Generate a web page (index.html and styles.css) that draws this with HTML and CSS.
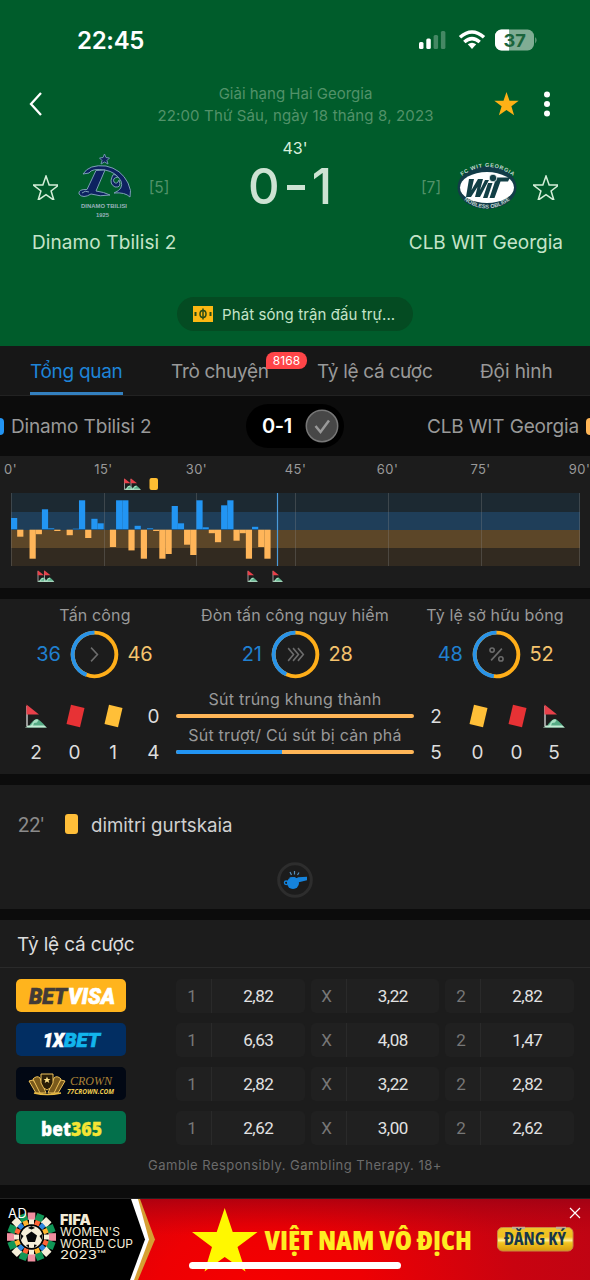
FILE: index.html
```html
<!DOCTYPE html>
<html lang="vi">
<head>
<meta charset="utf-8">
<title>Dinamo Tbilisi 2 - CLB WIT Georgia</title>
<link rel="stylesheet" href="styles.css">
</head>
<body>
<svg class="defs" width="0" height="0">
  <symbol id="corner" viewBox="0 0 22 24">
    <path d="M4 22.5 Q7 16 12 15 Q15 15.500 21.500 23.500 H2z" fill="#56ab85"/>
    <path d="M9 16.500 Q12 14.500 13.500 16 L12 18.500 9 19 8 22 5 23z" fill="#a9e0c3"/>
    <path d="M0 23.500 L3 21.500 H19 L22 23.500z" fill="#c4ecd5"/>
    <path d="M2 2V22" stroke="#ddd" stroke-width="1.300"/>
    <path d="M1.500 .5 L14 10.500 H1.500z" fill="#e8404a"/>
  </symbol>
  <symbol id="card" viewBox="0 0 20 24"><path d="M5.500 .8 L19 4 L14.500 23.300 L1 20z" fill="currentColor"/></symbol>
  <symbol id="star" viewBox="0 0 24 24"><path d="M12 1 L14.900 9.300 H23.700 L16.700 14.700 L19.300 23.300 L12 18.200 L4.700 23.300 L7.300 14.700 L.3 9.300 H9.100z"/></symbol>
</svg>

<header class="hero">
  <div class="status">
    <span class="clock">22:45</span>
    <svg width="120" height="24" viewBox="0 0 120 24">
      <g fill="#fff"><rect x="1" y="14" width="4.500" height="7" rx="1.500"/><rect x="8.300" y="10.500" width="4.500" height="10.500" rx="1.500"/></g>
      <g fill="#fff" opacity=".27"><rect x="15.600" y="7" width="4.500" height="14" rx="1.500"/><rect x="22.900" y="3" width="4.500" height="18" rx="1.500"/></g>
      <g fill="none" stroke="#fff" stroke-width="3.500"><path d="M42 9.300 Q54 -1.300 66 9.300"/><path d="M46.300 14 Q54 7.300 61.700 14"/></g>
      <path d="M49.800 16.300 Q54 13 58.200 16.300 L54 21z" fill="#fff"/>
      <rect x="77" y="1.500" width="39" height="21" rx="6.500" fill="#80ad94"/>
      <path d="M91 1.500H83.500A6.500 6.500 0 0 0 77 8V16A6.500 6.500 0 0 0 83.500 22.500H91z" fill="#fff"/>
      <path d="M117.300 9 Q119.700 12.200 117.300 15.500z" fill="#80ad94"/>
      <text x="85.500" y="18.500" class="battery" textLength="22.500" lengthAdjust="spacingAndGlyphs">37</text>
    </svg>
  </div>
  <div class="topbar">
    <svg class="back" width="16" height="26" viewBox="0 0 16 26"><path d="M13 2 L3 13 L13 24" fill="none" stroke="#fff" stroke-width="2.300"/></svg>
    <div class="league"><div class="league-name">Giải hạng Hai Georgia</div><div class="league-date">22:00 Thứ Sáu, ngày 18 tháng 8, 2023</div></div>
    <svg class="fav" width="25" height="25"><use href="#star"/></svg>
    <svg width="8" height="26" fill="#fff"><circle cx="4" cy="3.500" r="3"/><circle cx="4" cy="13" r="3"/><circle cx="4" cy="22.500" r="3"/></svg>
  </div>
  <div class="match">
    <svg class="outline" width="26" height="26" viewBox="-1 -1 26 26"><use href="#star"/></svg>
    <svg class="crest" width="54" height="68" viewBox="0 0 54 68">
      <path d="M26.500 1 L28 4.500 L31.500 5 L29 7.500 L30 11 L26.500 9 L23 11 L24 7.500 L21.500 5 L25 4.500z" fill="#11265d" stroke="#6e95ad"/>
      <g fill="#0d2260" stroke="#7c9fb5" stroke-width="1">
        <path d="M5 21 Q11 11 28 13 Q43 16 50 30 Q54 38 52 44 Q47 39 36 40 Q46 36 43 28 Q38 19 27 17 Q14 15 11 20z"/>
        <path d="M18 17.500 L27 17 L18 38 Q26 39 32 42 Q22 44 13 41 Q5 46 1 41 Q0 36 9 36.500z"/>
        <path d="M34 24 Q35 19 40 24 Q34 25 36 29 Q39 32 41 27 Q44 35 37 34 Q31 31 34 24z"/>
      </g>
      <path d="M4 40 Q7 37 11 39" stroke="#7c9fb5" fill="none"/>
      <text x="3" y="55" class="crest-text" textLength="46" lengthAdjust="spacingAndGlyphs">DINAMO TBILISI</text>
      <text x="18" y="64" class="crest-text" textLength="13" lengthAdjust="spacingAndGlyphs">1925</text>
    </svg>
    <span class="rank rank-home">[5]</span>
    <div class="score"><div class="minute">43'</div><div class="goals"><span>0</span><i></i><span>1</span></div></div>
    <span class="rank rank-away">[7]</span>
    <svg class="wit" width="62" height="48" viewBox="0 0 62 48">
      <defs><path id="arcTop" d="M6 13 Q31 -5 57 13"/><path id="arcBottom" d="M8 37 Q31 54 54 37"/></defs>
      <ellipse cx="31" cy="24.500" rx="29.500" ry="21.500" fill="#123c48"/>
      <ellipse cx="31" cy="24.500" rx="27" ry="15.500" fill="#fff"/>
      <g fill="#123f46">
        <path d="M13 16 H18 L15.500 27 L22 16 H27 L24 27 L29 17 H33 L24 34 H19 L21.500 24 L15 34 H10z"/>
        <path d="M32 20 H36.500 L31.500 35 H27z"/><path d="M38 14.500 H54 L52 18.500 H44.500 L38.500 35 H33.500 L39 18.500 H36z"/><circle cx="37" cy="15" r="3.800" stroke="#fff" stroke-width=".8"/>
      </g>
      <text class="wit-text"><textPath href="#arcTop" textLength="55">FC WIT GEORGIA</textPath></text>
      <text class="wit-text"><textPath href="#arcBottom" textLength="50">NOBLESS OBLIGE</textPath></text>
    </svg>
    <svg class="outline" width="26" height="26" viewBox="-1 -1 26 26"><use href="#star"/></svg>
  </div>
  <div class="names"><span class="n-home">Dinamo Tbilisi 2</span><span class="n-away">CLB WIT Georgia</span></div>
  <div class="stream">
    <svg width="20" height="16"><rect width="20" height="16" fill="#fcb813"/><g stroke="#2a4b17" stroke-width="1.500" fill="none"><ellipse cx="10" cy="8" rx="3" ry="3.500"/><path d="M10 2.500V13.500"/></g><rect x="1.500" y="6" width="2" height="4" fill="#2a4b17"/><rect x="16.500" y="6" width="2" height="4" fill="#2a4b17"/></svg>
    <span>Phát sóng trận đấu trự...</span>
  </div>
</header>

<nav class="tabs">
  <a class="tab active t1">Tổng quan</a>
  <a class="tab t2">Trò chuyện<b class="badge">8168</b></a>
  <a class="tab t3">Tỷ lệ cá cược</a>
  <a class="tab t4">Đội hình</a>
</nav>

<section class="versus">
  <div class="side"><i class="stub blue"></i><span class="v-home">Dinamo Tbilisi 2</span></div>
  <div class="result"><span>0-1</span><svg width="34" height="34"><circle cx="17" cy="17" r="15.700" fill="#474747" stroke="#777" stroke-width="1.500"/><path d="M10.500 17 L15.500 23 L24 11.500" stroke="#999" stroke-width="2.500" fill="none"/></svg></div>
  <div class="side away"><span class="v-away">CLB WIT Georgia</span><i class="stub orange"></i></div>
</section>

<section class="panel momentum">
  <svg width="590" height="132" viewBox="0 456 590 132">
    <g class="axis"><text x="10.500" y="474">0'</text><text x="103.500" y="474">15'</text><text x="196.500" y="474">30'</text><text x="295.500" y="474">45'</text><text x="387.500" y="474">60'</text><text x="480.500" y="474">75'</text><text x="579.500" y="474">90'</text></g>
    <g shape-rendering="crispEdges">
      <rect x="11" y="493" width="568.500" height="19" fill="#1c2932"/><rect x="11" y="512" width="568.500" height="17.500" fill="#1f3e59"/>
      <rect x="11" y="529.500" width="568.500" height="18.500" fill="#5c4628"/><rect x="11" y="548" width="568.500" height="18" fill="#322a20"/>
      <path d="M11.500 493V566M104.500 493V566M196.500 493V566M295.500 493V566M388.500 493V566M481.500 493V566M579.500 493V566" stroke="#8c8c8c" stroke-opacity=".3"/>
    </g>
    <g id="bars"></g>
    <path d="M277.500 493V566" stroke="#4a9ad9" stroke-width="1.200"/>
    <g>
      <use href="#corner" x="123.500" y="478" width="11" height="12"/><use href="#corner" x="130" y="478" width="11" height="12"/>
      <rect x="149.500" y="478" width="8.500" height="12" rx="2" fill="#ffbe32"/>
      <use href="#corner" x="37" y="570" width="11" height="12"/><use href="#corner" x="43.500" y="570" width="11" height="12"/>
      <use href="#corner" x="247" y="570" width="11" height="12"/><use href="#corner" x="272" y="570" width="11" height="12"/>
    </g>
  </svg>
</section>

<section class="panel stats">
  <div class="rings">
    <div class="ring-box"><h4>Tấn công</h4><div class="ring-row"><b>36</b><svg class="ring" viewBox="0 0 50 50"><circle cx="25" cy="25" r="22.300"/><circle class="home" cx="25" cy="25" r="22.300" pathLength="100" stroke-dasharray="44 56" transform="rotate(111.600 25 25)"/><path class="glyph" d="M21.500 18 L28 25 L21.500 32"/></svg><em>46</em></div></div>
    <div class="ring-box"><h4>Đòn tấn công nguy hiểm</h4><div class="ring-row"><b>21</b><svg class="ring" viewBox="0 0 50 50"><circle cx="25" cy="25" r="22.300"/><circle class="home" cx="25" cy="25" r="22.300" pathLength="100" stroke-dasharray="43 57" transform="rotate(115 25 25)"/><path class="glyph" d="M17.500 18.500 L23 25 L17.500 31.500 M22.500 18.500 L28 25 L22.500 31.500 M27.500 18.500 L33 25 L27.500 31.500"/></svg><em>28</em></div></div>
    <div class="ring-box"><h4>Tỷ lệ sở hữu bóng</h4><div class="ring-row last"><b>48</b><svg class="ring" viewBox="0 0 50 50"><circle cx="25" cy="25" r="22.300"/><circle class="home" cx="25" cy="25" r="22.300" pathLength="100" stroke-dasharray="48 52" transform="rotate(97 25 25)"/><g class="glyph"><path d="M19.500 31 L30.500 19"/><circle cx="20.500" cy="20.500" r="2.200"/><circle cx="29.500" cy="29.500" r="2.200"/></g></svg><em>52</em></div></div>
  </div>
  <div class="counts">
    <div class="col"><svg class="ic"><use href="#corner"/></svg><span>2</span></div>
    <div class="col"><svg class="ic red"><use href="#card"/></svg><span>0</span></div>
    <div class="col"><svg class="ic yellow"><use href="#card"/></svg><span>1</span></div>
    <div class="col"><span>0</span><span>4</span></div>
    <div class="shots">
      <div>Sút trúng khung thành</div><div class="bar"></div>
      <div>Sút trượt/ Cú sút bị cản phá</div><div class="bar"><i style="width:44.400%"></i></div>
    </div>
    <div class="col"><span>2</span><span>5</span></div>
    <div class="col"><svg class="ic yellow"><use href="#card"/></svg><span>0</span></div>
    <div class="col"><svg class="ic red"><use href="#card"/></svg><span>0</span></div>
    <div class="col"><svg class="ic"><use href="#corner"/></svg><span>5</span></div>
  </div>
</section>

<section class="panel events">
  <div class="event"><span class="time">22'</span><i></i><span class="player">dimitri gurtskaia</span></div>
  <svg class="whistle" width="38" height="38" viewBox="0 0 38 38"><circle cx="19" cy="19" r="16.300" fill="#1c1c1c" stroke="#2d2d2d" stroke-width="3"/><g fill="#1583dc"><circle cx="17" cy="22" r="6"/><path d="M13 16.500 L18.500 16 Q20 18 22 16.200 L31 15.800 V19.300 L22.800 21.300z"/></g><circle cx="10.200" cy="21.800" r="1.800" fill="none" stroke="#1583dc" stroke-width="1.300"/><path d="M14 11 L15.500 14 M18.500 10 V13.500 M23 11.500 L21.500 14" stroke="#5590bd" stroke-width="1.200"/></svg>
</section>

<section class="panel odds">
  <h3><span>Tỷ lệ cá cược</span></h3>
  <div class="rows">
    <div class="row">
      <svg class="logo betvisa"><text x="13" y="24.500" class="slant dark" textLength="38" lengthAdjust="spacingAndGlyphs">BET</text><text x="52" y="24.500" class="slant white" textLength="47" lengthAdjust="spacingAndGlyphs">VISA</text></svg>
      <div class="cell"><span>1</span><b>2,82</b></div><div class="cell"><span>X</span><b>3,22</b></div><div class="cell"><span>2</span><b>2,82</b></div>
    </div>
    <div class="row">
      <svg class="logo xbet"><text x="27" y="23.800" class="slant small white" textLength="21" lengthAdjust="spacingAndGlyphs">1X</text><text x="48" y="23.800" class="slant small cyan" textLength="36" lengthAdjust="spacingAndGlyphs">BET</text></svg>
      <div class="cell"><span>1</span><b>6,63</b></div><div class="cell"><span>X</span><b>4,08</b></div><div class="cell"><span>2</span><b>1,47</b></div>
    </div>
    <div class="row">
      <svg class="logo crown"><g fill="#7a5a1c" stroke="#f0c35a" stroke-width="1"><path d="M20 26 L13 14 L17 13 L27 26z"/><path d="M42 26 L49 14 L45 13 L35 26z"/><path d="M24 26 L17 12 Q21 8 24 11 L30 26z"/><path d="M38 26 L45 12 Q41 8 38 11 L32 26z"/><path d="M25 7 H37 V16 Q35 22 31 23 Q27 22 25 16z" fill="#2a1e08"/></g><path d="M31 9.500L32 12H34.500L32.500 13.500L33.300 16L31 14.500L28.700 16L29.500 13.500L27.500 12H30z" fill="#ffe38b"/><path d="M18 26 Q31 29 45 26" stroke="#e9ba43" stroke-width="1.600" fill="none"/><text x="54" y="17.500" class="script" textLength="42" lengthAdjust="spacingAndGlyphs">CROWN</text><text x="51" y="27" class="domain" textLength="47" lengthAdjust="spacingAndGlyphs">77CROWN.COM</text></svg>
      <div class="cell"><span>1</span><b>2,82</b></div><div class="cell"><span>X</span><b>3,22</b></div><div class="cell"><span>2</span><b>2,82</b></div>
    </div>
    <div class="row">
      <svg class="logo b365"><text x="25" y="24.500" class="bold white" textLength="30" lengthAdjust="spacingAndGlyphs">bet</text><text x="55" y="24.500" class="bold lemon" textLength="31" lengthAdjust="spacingAndGlyphs">365</text></svg>
      <div class="cell"><span>1</span><b>2,62</b></div><div class="cell"><span>X</span><b>3,00</b></div><div class="cell"><span>2</span><b>2,62</b></div>
    </div>
  </div>
  <p class="legal"><span>Gamble Responsibly. Gambling Therapy. 18+</span></p>
</section>

<footer class="ad">
  <svg width="590" height="82" viewBox="0 1198 590 82">
    <defs>
      <radialGradient id="red" gradientUnits="userSpaceOnUse" cx="260" cy="1285" r="340" gradientTransform="translate(0 514) scale(1 .6)"><stop offset="0" stop-color="#f50000"/><stop offset=".3" stop-color="#ee0003"/><stop offset=".75" stop-color="#c90310"/><stop offset="1" stop-color="#c00413"/></radialGradient>
      <linearGradient id="shade" x2="0" y2="1"><stop offset="0" stop-color="#8c0015" stop-opacity=".55"/><stop offset=".45" stop-color="#b00010" stop-opacity="0"/></linearGradient>
      <linearGradient id="gold" x2="0" y2="1"><stop offset="0" stop-color="#f0c52c"/><stop offset=".4" stop-color="#f0c01c"/><stop offset=".55" stop-color="#fff09a"/><stop offset=".65" stop-color="#f2c51f"/><stop offset="1" stop-color="#d99b0c"/></linearGradient>
    </defs>
    <rect y="1199" width="590" height="81" fill="url(#red)"/><rect y="1199" width="590" height="81" fill="url(#shade)"/>
    <path d="M0 1199H140L155 1239.500L138 1280H0z" fill="#d69f33"/>
    <path d="M0 1199H138L149 1239.500L134 1280H0z" fill="#fff"/>
    <path d="M0 1199H131L145 1239.500L130 1280H0z" fill="#000"/>
    <g id="mosaic"></g>
    <circle cx="31.500" cy="1237" r="12.500" fill="#020202"/>
    <circle cx="31.500" cy="1237" r="11" fill="#f6efd9"/>
    <path d="M31.500 1231.500L37 1235.500L35 1242H28L26 1235.500z" fill="#080808"/>
    <path d="M31.500 1226L35 1228L31.500 1229.500L28 1228zM42 1234V1240L39.500 1236zM21 1234V1240L23.500 1236zM37 1245L34 1248L34 1244.500zM26 1245L29 1248L29 1244.500z" fill="#080808"/>
    <g class="fifa"><text x="60" y="1225" class="fifa-bold" textLength="31" lengthAdjust="spacingAndGlyphs">FIFA</text><text x="60" y="1236" textLength="60" lengthAdjust="spacingAndGlyphs">WOMEN'S</text><text x="60" y="1247.500" textLength="73" lengthAdjust="spacingAndGlyphs">WORLD CUP</text><text x="60" y="1259" textLength="46" lengthAdjust="spacingAndGlyphs">2023™</text></g>
    <text x="8" y="1218" class="ad-label" textLength="19">AD</text>
    <path d="M224.700 1208L232.700 1232H257.500L237.500 1247L245.500 1271.500L224.700 1257L204.500 1271.500L212 1247L192 1232H216.700z" fill="#fff800"/>
    <text x="264.500" y="1249.500" class="slogan" textLength="207.500" lengthAdjust="spacingAndGlyphs">VIỆT NAM VÔ ĐỊCH</text>
    <rect x="497.500" y="1227.500" width="75.500" height="23.500" rx="5" fill="url(#gold)" stroke="#c98a45"/>
    <path d="M512 1228H525M556 1228H566" stroke="#bfae93" stroke-width="2.500"/>
    <text x="504" y="1244.500" class="cta" textLength="62" lengthAdjust="spacingAndGlyphs">ĐĂNG KÝ</text>
    <path d="M570 1208L580 1218M580 1208L570 1218" stroke="#fff" stroke-width="1.200"/>
    <rect x="189" y="1262" width="212" height="7" rx="3.500" fill="#fff"/>
  </svg>
</footer>
<script src="chart.js"></script>
</body>
</html>
```

FILE: styles.css
```css
* { box-sizing: border-box; }
body { margin: 0; width: 590px; height: 1280px; overflow: hidden; background: #0c0c0c; color: #999; font-family: Inter, "Noto Sans", sans-serif; }
svg { display: block; flex: none; }
.defs { position: absolute; }
h3, h4, p { margin: 0; font-weight: 400; }
i, em, b { font-style: normal; }
span, h4 { white-space: nowrap; }

.hero { height: 346px; background: #005c2b; color: #c5e4c9; padding-top: 28px; }
.status { height: 24px; display: flex; justify-content: space-between; align-items: center; padding: 0 52px 0 77px; }
.clock { color: #fff; font-size: 24px; font-weight: 600; letter-spacing: -.3px; }
.battery { font: 700 18px Inter, sans-serif; fill: #1b653c; }
.topbar { height: 60px; margin-top: 22px; display: flex; align-items: center; padding: 0 39px 0 28px; }
.league { flex: 1; margin-left: 9px; padding: 2px 0 0 40px; text-align: center; color: #529269; font-size: 15px; line-height: 22px; }
.league-date { letter-spacing: .15px; }
.topbar .fav { fill: #ffb116; margin: 0 24px 1px -4px; }
.match { height: 92px; display: flex; align-items: center; padding: 0 32px; margin-top: 7px; }
.outline { fill: none; stroke: #d5efd9; stroke-width: 1.400; }
.crest { margin-left: 20px; }
.crest-text { font: 700 6px "Liberation Sans", sans-serif; fill: #9ab2bd; }
.rank { color: #529269; font-size: 15.500px; width: 22px; text-align: center; }
.rank-home { margin-left: 16px; }
.score { flex: 1; text-align: center; margin-top: -20px; }
.minute { color: #d8efdc; font-size: 16px; height: 20px; line-height: 20px; }
.goals { height: 58px; padding-right: 10px; line-height: 58px; font-size: 49px; font-weight: 500; color: #cde3d3; display: flex; justify-content: center; align-items: center; gap: 7px; }
.goals i { width: 18px; height: 5px; background: #cde3d3; }
.wit { margin: 0 14px 0 14px; }
.wit-text { font: 700 5.500px "Liberation Sans", sans-serif; fill: #c0d7d0; }
.names { display: flex; justify-content: space-between; padding: 0 27px 0 32px; font-size: 19px; line-height: 24px; margin-top: -2px; }
.n-home { letter-spacing: .1px; }
.stream { width: 236px; height: 34px; margin: 42px 0 0 177px; border-radius: 17px; background: #044b22; display: flex; align-items: center; gap: 9px; padding-left: 16px; font-size: 15px; letter-spacing: .1px; }

.tabs { height: 50px; background: #171717; border-bottom: 1px solid #222; display: flex; padding-left: 30px; font-size: 19px; line-height: 52px; letter-spacing: -.3px; }
.tab { position: relative; height: 49px; white-space: nowrap; }
.t1 { width: 93px; margin-right: 48px; }
.t2 { width: 97px; margin-right: 49px; }
.t3 { width: 115px; margin-right: 48px; }
.t4 { letter-spacing: -.1px; }
.active { color: #1e84d8; border-bottom: 3px solid #3380bf; }
.badge { position: absolute; left: 95px; top: 6px; width: 41px; height: 17px; border-radius: 8px 8px 8px 1px; background: #ff4548; color: #fff; font: 400 12px/17px Inter, sans-serif; letter-spacing: .1px; text-align: center; }

.versus { height: 60px; display: flex; align-items: center; font-size: 19px; letter-spacing: -.15px; }
.side { flex: 1; display: flex; align-items: center; gap: 7px; }
.away { justify-content: flex-end; }
.stub { width: 4px; height: 17px; }
.blue { background: #2294f3; border-radius: 0 4px 4px 0; }
.orange { background: #ffb657; border-radius: 4px 0 0 4px; }
.result { width: 98px; height: 44px; border-radius: 22px; background: #000; display: flex; align-items: center; justify-content: space-between; padding: 0 5px 0 16px; color: #fff; font-weight: 600; font-size: 20px; letter-spacing: -.4px; }

.panel { background: #1c1c1c; margin-bottom: 11px; }
.momentum { height: 132px; }
.axis { font-size: 13px; fill: #999; text-anchor: middle; letter-spacing: .4px; }
.up { fill: #2295f3; } .down { fill: #ffb559; }

.stats { height: 175px; padding-top: 4px; }
.rings { display: grid; grid-template-columns: 190px 210px 190px; height: 85px; }
.ring-box { text-align: center; }
h4 { font-size: 16px; line-height: 25px; letter-spacing: .15px; }
.ring-row { display: flex; justify-content: center; align-items: center; gap: 9px; height: 52px; padding-right: 2px; font-size: 20px; }
.ring-box:nth-child(2) .ring-row { padding-right: 0; }
.ring-row b { width: 25px; color: #2080d0; font-weight: 400; text-align: right; letter-spacing: -.3px; }
.ring-row em { width: 25px; color: #f5c36d; text-align: left; letter-spacing: -.2px; }
.ring-box .last { padding: 0 0 0 2px; }
.ring { width: 49px; height: 49px; fill: none; stroke: #ffae19; stroke-width: 4; }
.ring .home { stroke: #2993e8; }
.glyph { stroke: #6c6c6c; stroke-width: 1.600; }
.counts { display: grid; grid-template-columns: 38px 39px 38px 43px 240px 42px 41px 37px 38px; padding: 5px 17px; height: 82px; }
.col { display: flex; flex-direction: column; align-items: center; padding-top: 6px; color: #ddd; font-size: 19px; line-height: 36px; }
.ic { width: 22px; height: 24px; margin: 5px 0 7px; }
.red, .yellow { padding-left: 1px; }
.red { color: #e73235; } .yellow { color: #ffbf38; }
.shots { text-align: center; font-size: 16px; letter-spacing: .23px; line-height: 24px; padding: 0 1px; white-space: nowrap; margin-top: -6px; }
.bar { height: 4px; margin: 3px 0 5px; border-radius: 2px; background: #ffb657; overflow: hidden; }
.bar i { display: block; height: 4px; background: #2295f3; }

.events { height: 124px; padding: 28px 18px 0; }
.event { display: flex; align-items: center; height: 24px; color: #d0d0d0; font-size: 18.700px; }
.event i { width: 13px; height: 20px; border-radius: 3px; background: #ffbe39; margin: 0 13px 2px 0; }
.time { width: 47px; color: #8b8b8b; font-family: Roboto, sans-serif; font-size: 20px; }
.whistle { margin: 24px auto 0; }

.odds { height: 265px; }
h3 { height: 48px; line-height: 50px; padding-left: 17px; color: #ddd; font-size: 19px; letter-spacing: -.15px; border-bottom: 1px solid #2a2a2a; }
.rows { display: grid; gap: 11px; padding: 11px 17px 0 16px; }
.row { display: grid; grid-template-columns: 154px 128.500px 128.500px 128.500px; gap: 6px; height: 33px; }
.logo { width: 110px; height: 33px; border-radius: 5px; }
.cell { display: grid; grid-template-columns: 36px 1fr; background: #202020; border-radius: 5px; line-height: 34px; text-align: center; font-family: Roboto, sans-serif; font-size: 17px; }
.cell span { border-right: 1px solid #2a2a2a; color: #777; padding-right: 3px; }
.cell b { color: #e2e2e2; font-weight: 400; letter-spacing: -.5px; }
.betvisa { background: #ffb41d; } .xbet { background: #022e62; } .crown { background: #020814; } .b365 { background: #03704b; }
.slant { font: italic 900 22.500px Roboto, sans-serif; stroke-width: .7px; }
.small { font-size: 20px; }
.dark { fill: #423b37; stroke: #423b37; }
.white { fill: #fff; stroke: #fff; }
.cyan { fill: #12b5ed; stroke: #12b5ed; }
.lemon { fill: #f4e434; stroke: #f4e434; }
.script { font: italic 12px "Liberation Serif", serif; fill: #ad8437; }
.domain { font: italic 700 7px "Open Sans", sans-serif; fill: #eecc50; }
.bold { font: 800 20px "Open Sans", sans-serif; stroke-width: .3px; }
.legal { text-align: center; color: #6b6b6b; font-size: 13px; line-height: 20px; margin-top: 11px; letter-spacing: .49px; }

.ad { height: 82px; margin-top: 13px; background: #222; }
.fifa { font: 11.500px Inter, sans-serif; fill: #f4ecd7; }
.fifa-bold { font-weight: 900; font-size: 14px; }
.ad-label { font: 13px Inter, sans-serif; fill: #fff; }
.slogan { font: 800 27px "Open Sans", sans-serif; font-stretch: 80%; fill: #ffec22; }
.cta { font: 700 17px "Open Sans", sans-serif; font-stretch: 80%; fill: #17374a; }
```

FILE: chart.js
```js
// Attack momentum per minute: positive is the home side, negative the away side.
const momentum = [11.3, -7, 0, -29, -4.5, 20, 1, -1.3, 0, -5.5, .6, 29, -8.3, 10.5, 6, 0, -17.3, 29, 29, -20.7, 3.5, -29, 1, -1.3, -29, -24.3, 23.3, 6, -15, -25.3, 29, 2, -3.5, -12.5, 24, 29, -11, -3.5, -29, 2.5, -17.3, -29];
const ns = 'http://www.w3.org/2000/svg';
const add = (parent, name, attrs) => {
  const el = document.createElementNS(ns, name);
  for (const k in attrs) el.setAttribute(k, attrs[k]);
  parent.appendChild(el);
};
const bars = document.getElementById('bars');
momentum.forEach((v, i) => add(bars, 'rect', {
  x: 11 + i * 6.18, y: v > 0 ? 529.3 - v : 529.7, width: 6.2, height: Math.abs(v), class: v > 0 ? 'up' : 'down'
}));

// Tiled rings around the ball emblem.
const mosaic = document.getElementById('mosaic');
const outer = ['#f08fa0', '#109656', '#f6efd9', '#109656'];
const inner = ['#f6efd9', '#ff6436', '#2d86dd', '#ffb531'];
for (let i = 0; i < 16; i++) {
  const turn = `rotate(${i * 22.5} 31.5 1237)`;
  add(mosaic, 'rect', { x: 27.7, y: 1212.5, width: 7.6, height: 7.5, fill: outer[i % 4], transform: turn });
  add(mosaic, 'rect', { x: 29, y: 1219.5, width: 5, height: 5, fill: inner[i % 4], transform: turn });
}
```
